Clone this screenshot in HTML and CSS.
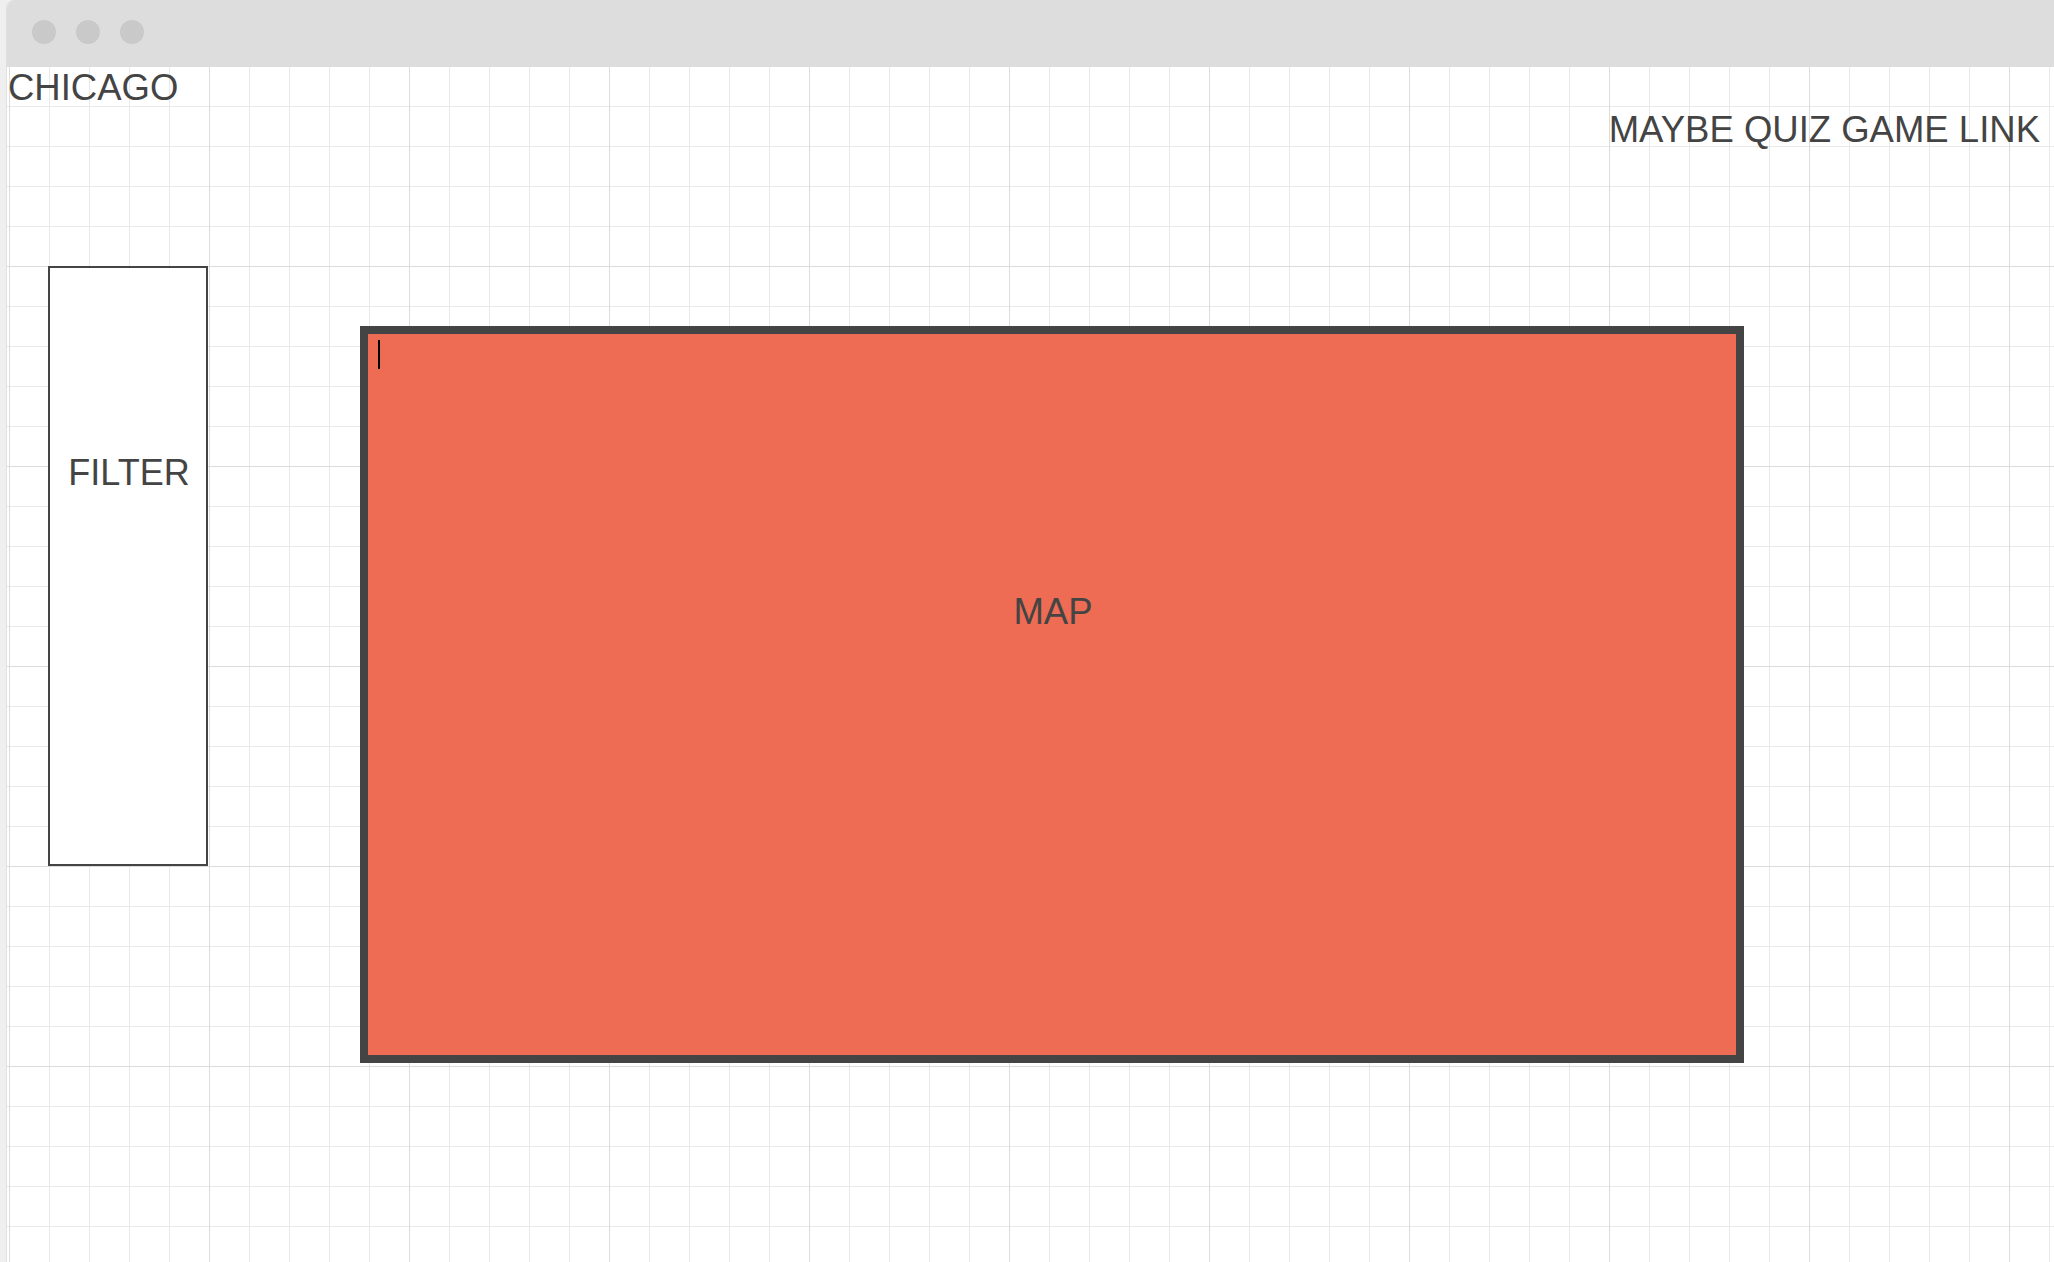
FILE: index.html
```html
<!DOCTYPE html>
<html>
<head>
<meta charset="utf-8">
<title>Chicago</title>
<link rel="stylesheet" href="styles.css">
</head>
<body>
<div class="window">
  <div class="titlebar">
    <span class="dot"></span><span class="dot"></span><span class="dot"></span>
  </div>
  <div class="canvas">
    <header class="top">
      <div class="brand">CHICAGO</div>
      <div class="quiz">MAYBE QUIZ GAME LINK</div>
    </header>
    <main class="main">
      <aside class="filter">FILTER</aside>
      <section class="map">
        <span class="caret"></span>
        <div class="map-label">MAP</div>
      </section>
    </main>
  </div>
</div>
</body>
</html>
```

FILE: styles.css
```css
html, body {
  margin: 0;
  padding: 0;
  height: 100%;
  overflow: hidden;
}
body {
  background: #efefef;
  font-family: "Liberation Sans", Arial, sans-serif;
  color: #444;
}
.window {
  margin-left: 6px;
  margin-right: -40px;
  height: 100%;
  border-left: 1px solid #e0e0e0;
  border-top-left-radius: 8px;
  border-top-right-radius: 8px;
  overflow: hidden;
  display: flex;
  flex-direction: column;
  background: #fff;
}
.titlebar {
  height: 66px;
  flex: none;
  background: #dddddd;
  display: flex;
  align-items: flex-start;
  gap: 20px;
  padding: 20px 0 0 25px;
  box-sizing: border-box;
}
.dot {
  width: 24px;
  height: 24px;
  border-radius: 50%;
  background: #c9c9c9;
}
.canvas {
  flex: 1;
  background-color: #fff;
  background-image:
    linear-gradient(to right, #dcdcdc 1px, transparent 1px),
    linear-gradient(to bottom, #dcdcdc 1px, transparent 1px),
    linear-gradient(to right, #e9e9e9 1px, transparent 1px),
    linear-gradient(to bottom, #e9e9e9 1px, transparent 1px);
  background-size: 200px 200px, 200px 200px, 40px 40px, 40px 40px;
  background-position: 2px 0, 2px 0, 2px 0, 2px 0;
}
.top {
  display: flex;
  justify-content: space-between;
  align-items: flex-start;
  padding-right: 54px;
}
.brand {
  font-size: 36.5px;
  line-height: 41px;
  padding-top: 1px;
  padding-left: 1px;
}
.quiz {
  font-size: 36.5px;
  line-height: 41px;
  margin-top: 43px;
}
.main {
  display: flex;
  align-items: flex-start;
  padding-left: 41px;
}
.filter {
  width: 160px;
  height: 600px;
  box-sizing: border-box;
  border: 2px solid #444;
  background: #fff;
  margin-top: 116px;
  text-align: center;
  font-size: 36px;
  line-height: 40px;
  padding-top: 185px;
  padding-left: 2px;
}
.map {
  position: relative;
  width: 1384px;
  height: 737px;
  box-sizing: border-box;
  margin-top: 176px;
  margin-left: 152px;
  border: 8px solid #444;
  background: #ed6c53;
  text-align: center;
  padding-top: 257px;
  padding-left: 2px;
}
.map-label {
  font-size: 36.5px;
  line-height: 41px;
}
.caret {
  position: absolute;
  left: 10px;
  top: 6px;
  width: 2px;
  height: 29px;
  background: #000;
}
```
